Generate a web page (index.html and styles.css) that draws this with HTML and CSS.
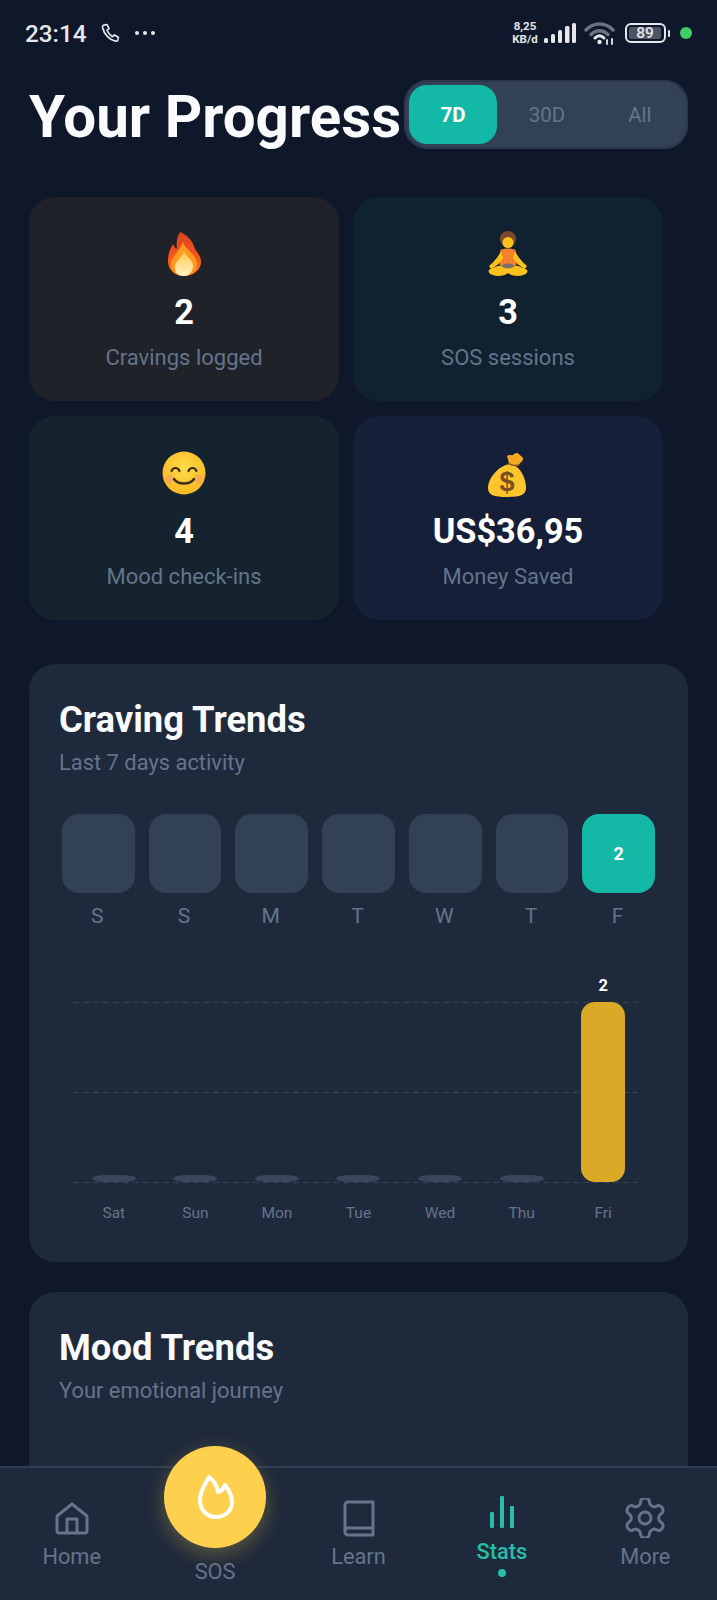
FILE: index.html
```html
<!DOCTYPE html>
<html lang="en">
<head>
<meta charset="utf-8">
<title>Your Progress</title>
<link rel="stylesheet" href="styles.css">
</head>
<body>
<div class="page">
  <div class="status">
    <div class="status-left">
      <span class="time">23:14</span>
      <svg class="phone" viewBox="0 0 20 20" width="20" height="20" fill="none" stroke="#e5e7eb" stroke-width="1.7" stroke-linejoin="round" stroke-linecap="round"><path d="M2.500 2.200 6 1.500l2 4.200-2 1.600c1 2.600 3 5 5.400 6.400l2-1.800 4 2.400-.6 2.600c-.3 1-1.200 1.500-2.200 1.300C8.500 17 3 11 1.500 4.500c-.2-1 .1-2 1-2.300z"/></svg>
      <svg class="dots" viewBox="0 0 20 4" width="20" height="4" fill="#e5e7eb"><circle cx="2" cy="2" r="2"/><circle cx="10" cy="2" r="2"/><circle cx="18" cy="2" r="2"/></svg>
    </div>
    <div class="status-right">
      <div class="speed">8,25<br>KB/d</div>
      <svg class="signal" viewBox="0 0 32 21" width="32" height="21" fill="#e5e7eb"><rect x="0" y="15" width="4" height="5" rx="1.500"/><rect x="7" y="11" width="4" height="9" rx="1.500"/><rect x="14" y="7" width="4" height="13" rx="1.500"/><rect x="21" y="3" width="4.500" height="17" rx="1.500"/><rect x="28" y="0" width="4" height="20" rx="1.500"/></svg>
      <svg class="wifi" viewBox="0 0 31 24" width="31" height="24" fill="none" stroke-linecap="round"><path d="M2 9C9.500 1 21.500 1 29 9" stroke="#6b7280" stroke-width="3.500"/><path d="M7 13.500c5-5 12-5 17 0" stroke="#6b7280" stroke-width="3.500"/><path d="M11 17c3-3 6-3 9 0" stroke="#e5e7eb" stroke-width="3"/><circle cx="15.500" cy="21" r="2.200" fill="#e5e7eb"/><path d="M23 23v-4M28 23v-5" stroke="#d1d5db" stroke-width="2"/></svg>
      <div class="battery"><div class="battery-shell"><span class="battery-level">89</span></div><span class="battery-nub"></span></div>
      <span class="green-dot"></span>
    </div>
  </div>

  <main class="main">
    <header class="head">
      <h1 class="title">Your Progress</h1>
      <div class="range">
        <span class="range-btn range-on">7D</span>
        <span class="range-btn">30D</span>
        <span class="range-btn">All</span>
      </div>
    </header>

    <section class="stats">
      <div class="stat stat-fire">
        <svg class="emoji emoji-fire" viewBox="0 0 35 46" width="35" height="46">
          <defs>
            <linearGradient id="fg" x1="0" y1="0" x2="0" y2="1"><stop offset="0" stop-color="#d9431f"/><stop offset=".5" stop-color="#f4511e"/><stop offset="1" stop-color="#ff7a1a"/></linearGradient>
            <linearGradient id="fy" x1="0" y1="0" x2="0" y2="1"><stop offset="0" stop-color="#ffc94d"/><stop offset="1" stop-color="#fff3c4"/></linearGradient>
          </defs>
          <path d="M13 1C21 4 26 11 28 18 31 22 34 26 34 31 34 39 26 45 17 45 8 45 1 39 1 30 1 23 3 18 6 13 7 15 8 17 10 18 9 12 10 6 13 1Z" fill="url(#fg)"/>
          <path d="M16 11C18 18 30 24 30 33 30 40 24 45 17 45 10 45 4 40 4 33 4 26 13 20 16 11Z" fill="#ff9a1f"/>
          <path d="M17 20C19 26 27 29 26 36 25 42 21 45 17 45 12 45 7 42 8 35 9 29 15 27 17 20Z" fill="url(#fy)"/>
        </svg>
        <div class="stat-value">2</div>
        <div class="stat-label">Cravings logged</div>
      </div>
      <div class="stat stat-sos">
        <svg class="emoji" viewBox="0 0 42 46" width="42" height="46">
          <circle cx="21" cy="8" r="8" fill="#7a4a2b"/>
          <circle cx="21" cy="11.500" r="5.500" fill="#fcc21b"/>
          <path d="M13.500 19c4-2 11-2 15 0l1 15h-17z" fill="#f4802b"/>
          <path d="M14 20C11 26 8 30 2 35l2 3c6-3 10-7 12-11zM28 20c3 6 6 10 12 15l-2 3c-6-3-10-7-12-11z" fill="#fcc21b"/>
          <path d="M21 35C15 33 7 36 2 39c-2 3 3 6 9 6 4 0 8-1 10-3 2 2 6 3 10 3 6 0 11-3 9-6-5-3-13-6-19-4z" fill="#fcc21b"/>
          <ellipse cx="21" cy="35" rx="6" ry="2.500" fill="#78706a"/>
        </svg>
        <div class="stat-value">3</div>
        <div class="stat-label">SOS sessions</div>
      </div>
      <div class="stat stat-mood">
        <svg class="emoji" viewBox="0 0 46 46" width="46" height="46">
          <defs><radialGradient id="sm" cx=".5" cy=".4" r=".65"><stop offset="0" stop-color="#ffdd4d"/><stop offset="1" stop-color="#f7b51c"/></radialGradient></defs>
          <circle cx="23" cy="23" r="21.500" fill="url(#sm)"/>
          <circle cx="8.500" cy="29" r="4.500" fill="#f59a6a" opacity=".55"/>
          <circle cx="37.500" cy="29" r="4.500" fill="#f59a6a" opacity=".55"/>
          <path d="M10.500 21c1.500-4 6.500-4 8 0M27.500 21c1.500-4 6.500-4 8 0" fill="none" stroke="#3c2d14" stroke-width="2.200" stroke-linecap="round"/>
          <path d="M13 29c4 6 16 6 20 0" fill="none" stroke="#3c2d14" stroke-width="2.400" stroke-linecap="round"/>
        </svg>
        <div class="stat-value">4</div>
        <div class="stat-label">Mood check-ins</div>
      </div>
      <div class="stat stat-money">
        <svg class="emoji emoji-bag" viewBox="0 0 42 46" width="42" height="46">
          <path d="M24 12C12 13 1 26 1 36c0 7 6 9 19 9s19-2 19-9C39 26 33 14 24 12z" fill="#fcc52b"/>
          <path d="M22 11 20 4c3-2 4 0 6-1 2-2 4-3 6-1 1 2 4 2 4 5s-3 3-4 6c-3 1-6 2-10-2z" fill="#f7a823"/>
          <path d="M21 11c3 2 7 3 11 2" fill="none" stroke="#8a5a1c" stroke-width="1.500"/>
          <text class="bag-dollar" x="20" y="39">$</text>
        </svg>
        <div class="stat-value">US$36,95</div>
        <div class="stat-label">Money Saved</div>
      </div>
    </section>

    <section class="panel">
      <h2 class="panel-title">Craving Trends</h2>
      <p class="panel-sub">Last 7 days activity</p>
      <div class="week">
        <div class="day"><div class="day-box"></div><span class="day-letter">S</span></div>
        <div class="day"><div class="day-box"></div><span class="day-letter">S</span></div>
        <div class="day"><div class="day-box"></div><span class="day-letter">M</span></div>
        <div class="day"><div class="day-box"></div><span class="day-letter">T</span></div>
        <div class="day"><div class="day-box"></div><span class="day-letter">W</span></div>
        <div class="day"><div class="day-box"></div><span class="day-letter">T</span></div>
        <div class="day"><div class="day-box day-on">2</div><span class="day-letter">F</span></div>
      </div>
      <div class="chart">
        <div class="plot">
          <div class="lines"><i class="line"></i><i class="line"></i><i class="line"></i></div>
          <div class="col"><div class="bar bar-empty"></div></div>
          <div class="col"><div class="bar bar-empty"></div></div>
          <div class="col"><div class="bar bar-empty"></div></div>
          <div class="col"><div class="bar bar-empty"></div></div>
          <div class="col"><div class="bar bar-empty"></div></div>
          <div class="col"><div class="bar bar-empty"></div></div>
          <div class="col"><span class="bar-value">2</span><div class="bar bar-full"></div></div>
        </div>
        <div class="axis">
          <span>Sat</span><span>Sun</span><span>Mon</span><span>Tue</span><span>Wed</span><span>Thu</span><span>Fri</span>
        </div>
      </div>
    </section>

    <section class="panel panel-mood">
      <h2 class="panel-title">Mood Trends</h2>
      <p class="panel-sub">Your emotional journey</p>
    </section>
  </main>

  <nav class="nav">
    <div class="nav-item">
      <div class="nav-icon">
        <svg viewBox="0 0 34 33" width="34" height="33" fill="none" stroke="#64748b" stroke-width="3" stroke-linejoin="round"><path d="M2 14 17 2l15 12v15a2 2 0 0 1-2 2H4a2 2 0 0 1-2-2z"/><path d="M12 31V17h10v14"/></svg>
      </div>
      <span class="nav-label">Home</span>
    </div>
    <div class="nav-item nav-sos">
      <div class="sos-btn">
        <svg viewBox="0 0 41 46" width="41" height="46" fill="none" stroke="#fff" stroke-width="4" stroke-linejoin="round"><path d="M14 3c4 3 8 9 9 15 3-1 6-4 7-7 4 5 7 11 7 17 0 9-7 15-16 15S5 36 5 26C5 17 10 10 14 3Z"/></svg>
      </div>
      <span class="nav-label">SOS</span>
    </div>
    <div class="nav-item">
      <div class="nav-icon">
        <svg viewBox="0 0 32 37" width="32" height="37" fill="none" stroke="#64748b" stroke-width="3" stroke-linejoin="round"><path d="M2 32V5a3 3 0 0 1 3-3h25v33H5a3 3 0 0 1-3-3z"/><path d="M2 31a3 3 0 0 1 3-3h25"/></svg>
      </div>
      <span class="nav-label">Learn</span>
    </div>
    <div class="nav-item nav-active">
      <div class="nav-icon nav-icon-stats">
        <svg viewBox="0 0 25 32" width="25" height="32" fill="#26bfa8"><rect x="0" y="16" width="4" height="16" rx="1"/><rect x="10" y="0" width="4" height="32" rx="1"/><rect x="20" y="10" width="4" height="22" rx="1"/></svg>
      </div>
      <span class="nav-label">Stats</span>
      <span class="nav-dot"></span>
    </div>
    <div class="nav-item">
      <div class="nav-icon">
        <svg viewBox="2 2 20 20" width="40" height="40" fill="none" stroke="#64748b" stroke-width="1.500" stroke-linejoin="round"><path d="M12.220 2h-.44a2 2 0 0 0-2 2v.18a2 2 0 0 1-1 1.730l-.43.25a2 2 0 0 1-2 0l-.15-.08a2 2 0 0 0-2.730.73l-.22.38a2 2 0 0 0 .73 2.730l.15.1a2 2 0 0 1 1 1.720v.51a2 2 0 0 1-1 1.740l-.15.09a2 2 0 0 0-.73 2.730l.22.38a2 2 0 0 0 2.730.73l.15-.08a2 2 0 0 1 2 0l.43.25a2 2 0 0 1 1 1.730V20a2 2 0 0 0 2 2h.44a2 2 0 0 0 2-2v-.18a2 2 0 0 1 1-1.730l.43-.25a2 2 0 0 1 2 0l.15.08a2 2 0 0 0 2.730-.73l.22-.39a2 2 0 0 0-.73-2.730l-.15-.08a2 2 0 0 1-1-1.740v-.5a2 2 0 0 1 1-1.740l.15-.09a2 2 0 0 0 .73-2.730l-.22-.38a2 2 0 0 0-2.730-.73l-.15.08a2 2 0 0 1-2 0l-.43-.25a2 2 0 0 1-1-1.730V4a2 2 0 0 0-2-2z"/><circle cx="12" cy="12" r="3"/></svg>
      </div>
      <span class="nav-label">More</span>
    </div>
  </nav>
</div>
</body>
</html>
```
FILE: styles.css
```css
* { box-sizing: border-box; }
html, body { margin: 0; padding: 0; }
body { background: #0f172a; font-family: Roboto, "Liberation Sans", sans-serif; color: #fff; }

.page { width: 717px; height: 1600px; display: flex; flex-direction: column; overflow: hidden; background: #0f172a; }

/* status bar */
.status { height: 66px; flex: none; display: flex; justify-content: space-between; align-items: center; padding: 0 25px 0 25px; }
.status-left { display: flex; align-items: center; }
.time { font-size: 24.300px; font-weight: 500; color: #e5e7eb; width: 76px; }
.dots { margin-left: 14px; }
.status-right { display: flex; align-items: center; }
.speed { font-size: 11.500px; font-weight: 700; line-height: 13.500px; color: #e5e7eb; text-align: center; width: 28px; }
.signal { margin-left: 5px; }
.wifi { margin-left: 8px; }
.battery { display: flex; align-items: center; margin-left: 10px; }
.battery-shell { width: 41px; height: 20px; border: 2px solid #e5e7eb; border-radius: 6px; padding: 2px; display: flex; }
.battery-level { width: 32px; background: #4b5563; border-radius: 2px; font-size: 15.500px; font-weight: 500; line-height: 12px; text-align: center; color: #e5e7eb; }
.battery-nub { width: 2px; height: 7px; background: #e5e7eb; margin-left: 2px; border-radius: 1px; }
.green-dot { width: 12px; height: 12px; border-radius: 50%; background: #3ecf62; margin-left: 10px; }

/* main */
.main { flex: 1; min-height: 0; overflow: hidden; padding: 14px 29px 0 29px; }
.head { display: flex; align-items: flex-start; height: 69px; margin-bottom: 48px; }
.title { margin: 0; padding-top: 3px; font-size: 58.300px; font-weight: 700; line-height: 69px; color: #f8fafc; white-space: nowrap; }
.range { margin-left: 3px; width: 284px; height: 69px; flex: none; background: #334155; border-radius: 24px; padding: 5px; display: flex; box-shadow: inset 0 0 0 2px #2b384c; }
.range-btn { padding: 0 31.500px; font-size: 20.500px; color: #64748b; display: flex; align-items: center; border-radius: 18px; }
.range-on { background: #14b8a6; color: #fff; font-weight: 700; }

.stats { display: grid; grid-template-columns: 310px 310px; grid-auto-rows: 204px; column-gap: 14px; row-gap: 15px; }
.stat { border-radius: 26px; display: flex; flex-direction: column; align-items: center; padding-top: 34px; }
.stat-fire { background: #1f2229; }
.stat-sos { background: #10212f; }
.stat-mood { background: #14232e; }
.stat-money { background: #151f38; }
.emoji { display: block; flex: none; }
.emoji-fire { margin-left: 1px; }
.emoji-bag { margin-top: 2px; margin-bottom: -2px; }
.bag-dollar { font-family: "Liberation Sans", sans-serif; font-size: 27px; font-weight: 700; fill: #7a5020; text-anchor: middle; }
.stat-value { font-size: 34.300px; font-weight: 700; line-height: 40px; margin-top: 15px; color: #fff; }
.stat-label { font-size: 22px; line-height: 28px; margin-top: 12px; color: #64748b; }

/* panels */
.panel { margin-top: 44px; background: #1e293b; border-radius: 26px; padding: 35px 30px 37px; }
.panel-mood { margin-top: 30px; height: 300px; }
.panel-title { margin: 0; font-size: 36.400px; font-weight: 700; line-height: 42px; color: #f8fafc; }
.panel-sub { margin: 8px 0 0; font-size: 21.900px; line-height: 28px; color: #64748b; }

.week { display: grid; grid-template-columns: repeat(7, 1fr); column-gap: 14px; margin: 37px 3px 0 3px; }
.day { display: flex; flex-direction: column; align-items: center; }
.day-box { width: 100%; height: 79px; border-radius: 17px; background: #334155; display: flex; align-items: center; justify-content: center; font-size: 18px; font-weight: 700; color: #fff; }
.day-on { background: #14b8a6; }
.day-letter { margin-top: 11px; padding-right: 2px; font-size: 21px; line-height: 24px; color: #64748b; }

.chart { margin: 46px 14px 0 14px; }
.plot { position: relative; height: 208px; display: grid; grid-template-columns: repeat(7, 1fr); }
.lines { position: absolute; left: 0; right: 7px; top: 28px; height: 181px; display: flex; flex-direction: column; justify-content: space-between; }
.line { display: block; height: 1px; background-image: repeating-linear-gradient(90deg, #354358 0 6px, transparent 6px 10px); }
.col { position: relative; display: flex; flex-direction: column; align-items: center; justify-content: flex-end; }
.bar { width: 44px; border-radius: 14px; }
.bar-empty { height: 7px; background: #3a4659; border-radius: 14px / 3.500px; }
.bar-full { height: 180px; background: #d9a927; }
.bar-value { font-size: 16.500px; font-weight: 700; line-height: 22px; margin-bottom: 5px; color: #fff; }
.axis { display: grid; grid-template-columns: repeat(7, 1fr); margin-top: 19px; }
.axis span { text-align: center; font-size: 15.500px; line-height: 24px; color: #64748b; }

/* nav */
.nav { flex: none; height: 134px; background: #1e293b; border-top: 2px solid #2f3e54; display: flex; position: relative; }
.nav-item { flex: 1; display: flex; flex-direction: column; align-items: center; padding-top: 30px; }
.nav-icon { height: 40px; display: flex; align-items: center; justify-content: center; }
.nav-label { margin-top: 6px; font-size: 21.800px; line-height: 26px; color: #64748b; }
.nav-sos { padding-top: 0; }
.sos-btn { width: 102px; height: 102px; margin-top: -22px; border-radius: 50%; background: #fdd14d; box-shadow: 0 6px 20px rgba(253, 209, 77, .3); display: flex; align-items: center; justify-content: center; flex: none; }
.nav-sos .nav-label { margin-top: 11px; }
.nav-icon-stats { height: 32px; margin-top: -2px; margin-left: 2px; }
.nav-active .nav-label { margin-top: 11px; color: #26bfa8; font-weight: 500; }
.nav-dot { width: 8px; height: 8px; border-radius: 50%; background: #26bfa8; margin-top: 4px; }
```
